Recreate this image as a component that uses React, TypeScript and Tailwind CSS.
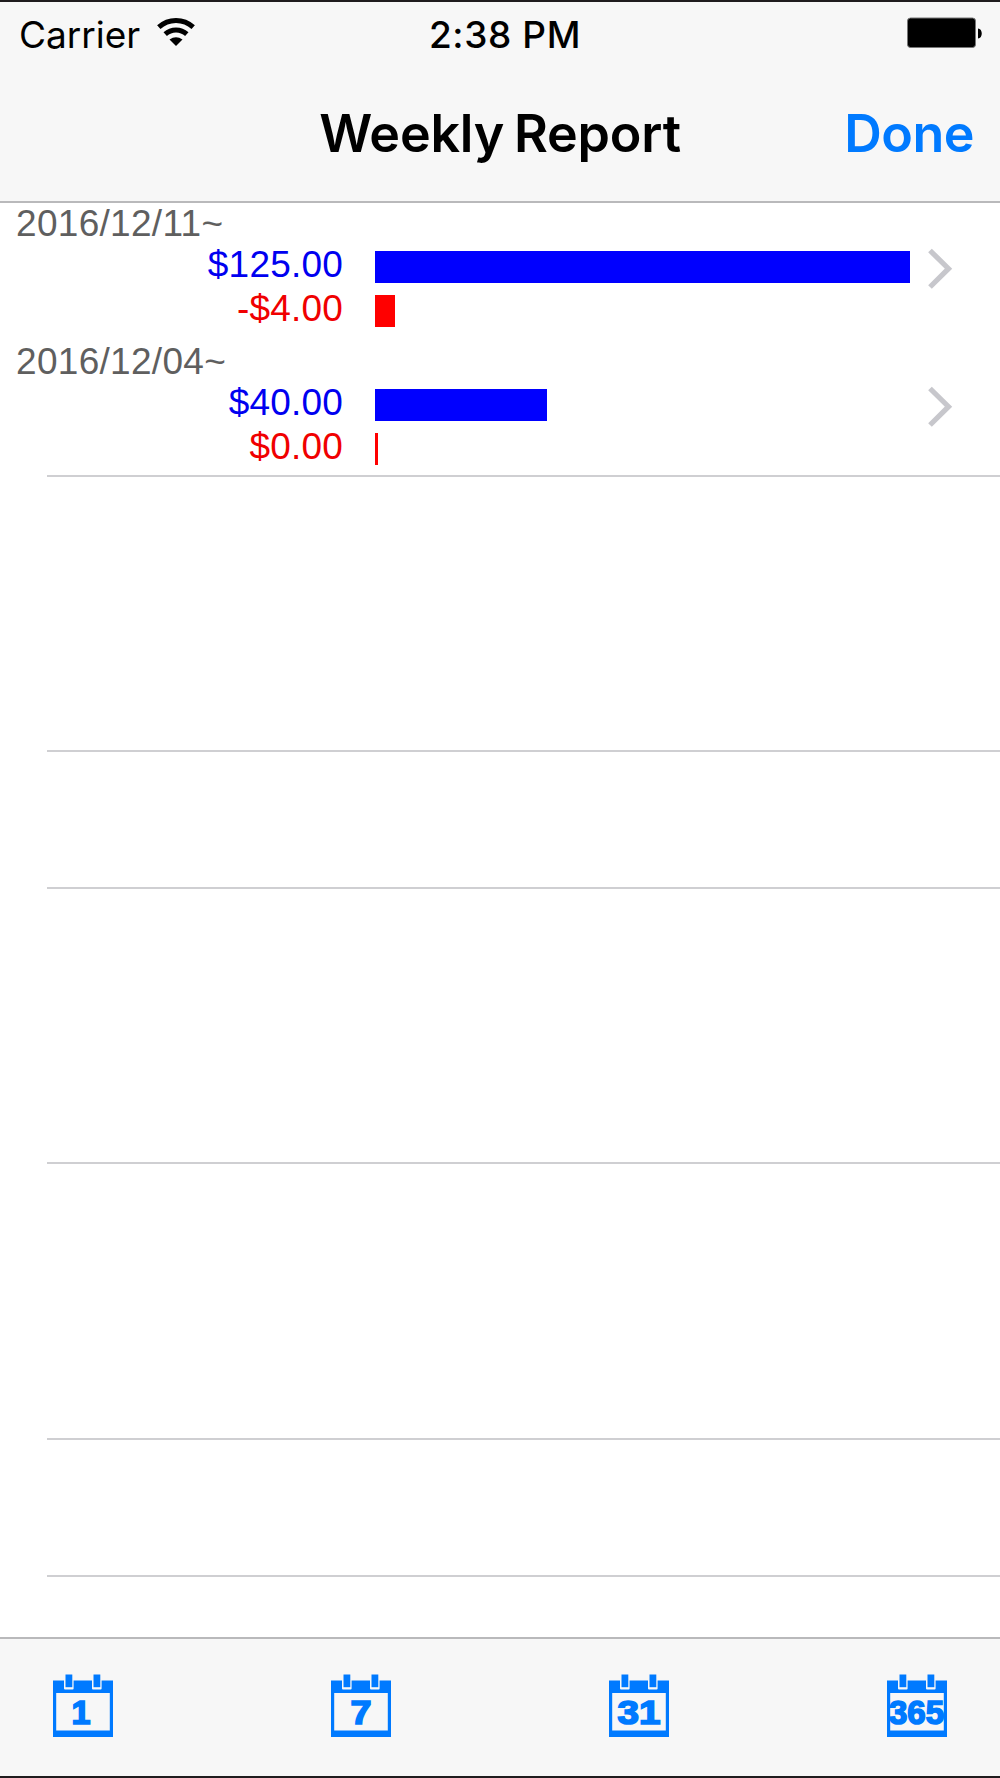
const weeks = [
  {
    date: "2016/12/11~",
    income: "$125.00",
    expense: "-$4.00",
    incomeWidth: 535,
    expenseWidth: 20,
  },
  {
    date: "2016/12/04~",
    income: "$40.00",
    expense: "$0.00",
    incomeWidth: 172,
    expenseWidth: 3,
  },
];

const tabs = [
  { label: "1", x: 28, width: 19 },
  { label: "7", x: 30, width: 21 },
  { label: "31", x: 30, width: 43 },
  { label: "365", x: 29.5, width: 55 },
];

function WifiIcon() {
  return (
    <svg className="ml-[17px] mt-[15px] h-[29px] w-[38px]" viewBox="0 0 38 29" fill="none" stroke="#000">
      <path d="M1.8 10.2A25.5 25.5 0 0 1 36.2 10.2" strokeWidth="5" />
      <path d="M8.2 17.2A16 16 0 0 1 29.8 17.2" strokeWidth="5" />
      <path d="M12.5 22.6Q19 17.8 25.5 22.6L19 28.9Z" fill="#000" stroke="none" />
    </svg>
  );
}

function BatteryIcon() {
  return (
    <svg className="mr-[17px] mt-[15px] h-[32px] w-[76px]" viewBox="0 0 76 32">
      <rect x="0.5" y="1" width="68" height="29.5" rx="3" fill="#000" stroke="#777" strokeWidth="1" />
      <path d="M71 11.5C76 11.5 76 21.5 71 21.5Z" fill="#000" />
    </svg>
  );
}

function Chevron() {
  return (
    <svg className="ml-[17px] mt-[44px] h-[44px] w-[26px] shrink-0" viewBox="0 0 26 44" fill="none">
      <path d="M3 3.5L21.5 21.7L3 40" stroke="#c7c7cc" strokeWidth="5.2" />
    </svg>
  );
}

function CalendarIcon({ label, x, width }: { label: string; x: number; width: number }) {
  return (
    <svg className="h-[64px] w-[60px]" viewBox="0 0 60 64">
      <path fillRule="evenodd" d="M0 6.5H60V63H0ZM3.2 19V56.5H56.8V19Z" fill="#007aff" />
      <rect x="11" y="0" width="9.6" height="15.6" rx="1" fill="#f7f7f7" />
      <rect x="39" y="0" width="9.6" height="15.6" rx="1" fill="#f7f7f7" />
      <rect x="12.5" y="0.5" width="6.8" height="12.7" fill="#007aff" />
      <rect x="40.5" y="0.5" width="6.8" height="12.7" fill="#007aff" />
      <text
        x={x}
        y="49.5"
        textAnchor="middle"
        textLength={width}
        lengthAdjust="spacingAndGlyphs"
        fill="#007aff"
        stroke="#007aff"
        strokeWidth="1.7"
        className="font-['Liberation_Sans',Arial,sans-serif] text-[34px] font-bold"
      >
        {label}
      </text>
    </svg>
  );
}

function WeekRow({ week }: { week: (typeof weeks)[number] }) {
  return (
    <li className="flex h-[138px] font-['Liberation_Sans',Arial,sans-serif] text-[37px] tracking-[0.2px]">
      <div className="w-[343px] shrink-0 whitespace-nowrap">
        <div className="pl-[16px] leading-[42px] tracking-[0.3px] text-[#5f5f5f]">{week.date}</div>
        <div className="text-right leading-[40px] text-[#0000f0]">{week.income}</div>
        <div className="text-right leading-[47px] text-[#f00000]">{week.expense}</div>
      </div>
      <div className="ml-[32px] flex w-[535px] shrink-0 flex-col gap-[12px] pt-[48px]">
        <div className="h-[32px] bg-[#0000ff]" style={{ width: week.incomeWidth }} />
        <div className="h-[32px] bg-[#ff0000]" style={{ width: week.expenseWidth }} />
      </div>
      <Chevron />
    </li>
  );
}

export default function App() {
  return (
    <div className="flex h-[1778px] w-[1000px] flex-col overflow-hidden border-y-2 border-[#1f1c1e] bg-white font-['Inter',sans-serif] text-black">
      <header className="h-[201px] shrink-0 border-b-2 border-[#b9b9bb] bg-[#f7f7f7]">
        <div className="grid h-[64px] grid-cols-3 text-[37px] leading-[65px]">
          <div className="flex pl-[19px]">
            <span>Carrier</span>
            <WifiIcon />
          </div>
          <div className="pl-[10px] text-center font-medium tracking-[0.6px]">2:38 PM</div>
          <div className="flex justify-end">
            <BatteryIcon />
          </div>
        </div>
        <div className="grid grid-cols-[1fr_auto_1fr] text-[52px] font-semibold leading-[135px]">
          <div />
          <h1 className="tracking-[-0.2px] [word-spacing:-3px]">Weekly Report</h1>
          <div className="pr-[26px] text-right tracking-[-0.5px] text-[#007aff]">Done</div>
        </div>
      </header>

      <main className="flex-1">
        <ul>
          {weeks.map((week) => (
            <WeekRow key={week.date} week={week} />
          ))}
        </ul>
        {/* empty table rows below the last week */}
        <div className="-mt-[4px] ml-[47px]">
          <div className="h-[275px] border-t-2 border-[#cfcfd2]" />
          <div className="h-[137px] border-t-2 border-[#cfcfd2]" />
          <div className="h-[275px] border-t-2 border-[#cfcfd2]" />
          <div className="h-[276px] border-t-2 border-[#cfcfd2]" />
          <div className="h-[137px] border-t-2 border-[#cfcfd2]" />
          <div className="border-t-2 border-[#cfcfd2]" />
        </div>
      </main>

      <nav className="flex h-[139px] shrink-0 justify-between border-t-2 border-[#b9b9bb] bg-[#f7f7f7] px-[53px] pt-[35px]">
        {tabs.map((tab) => (
          <CalendarIcon key={tab.label} label={tab.label} x={tab.x} width={tab.width} />
        ))}
      </nav>
    </div>
  );
}
